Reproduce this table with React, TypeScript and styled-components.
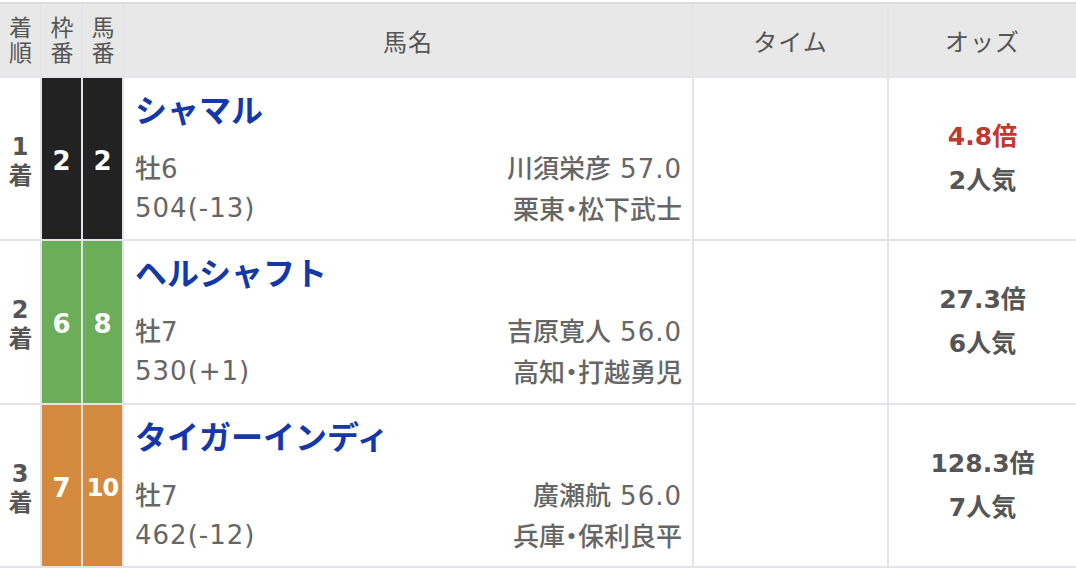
import styled, {createGlobalStyle} from "styled-components";

type Horse = {
    rank: number
    frame: number
    number: number
    name: string
    sex: string
    age: number
    weight: string
    jockey: string
    load: string
    stable: string
    odds: string
    popular: string
}

const horses: Horse[] = [
    {rank: 1, frame: 2, number: 2, name: "シャマル", sex: "牡", age: 6, weight: "504(-13)", jockey: "川須栄彦", load: "57.0", stable: "栗東・松下武士", odds: "4.8倍", popular: "2人気"},
    {rank: 2, frame: 6, number: 8, name: "ヘルシャフト", sex: "牡", age: 7, weight: "530(+1)", jockey: "吉原寛人", load: "56.0", stable: "高知・打越勇児", odds: "27.3倍", popular: "6人気"},
    {rank: 3, frame: 7, number: 10, name: "タイガーインディ", sex: "牡", age: 7, weight: "462(-12)", jockey: "廣瀬航", load: "56.0", stable: "兵庫・保利良平", odds: "128.3倍", popular: "7人気"},
]

const frameColors: Record<number, string> = {
    1: "#ffffff",
    2: "#222222",
    3: "#d9433b",
    4: "#2f6fc4",
    5: "#e8c83a",
    6: "#6bad58",
    7: "#d48b3f",
    8: "#e59bb3",
}

const LATIN = `"DejaVu Sans", "Noto Sans CJK JP", sans-serif`

export default function App() {
    return (
        <>
            <GlobalStyle/>
            <Table>
                <HeadCell><Vertical>着順</Vertical></HeadCell>
                <HeadCell><Vertical>枠番</Vertical></HeadCell>
                <HeadCell><Vertical>馬番</Vertical></HeadCell>
                <HeadCell>馬名</HeadCell>
                <HeadCell>タイム</HeadCell>
                <HeadCell>オッズ</HeadCell>

                {horses.map(h => (
                    <Row key={h.rank}>
                        <RankCell>
                            <RankText><RankNum>{h.rank}</RankNum>着</RankText>
                        </RankCell>
                        <NumberCell $bg={frameColors[h.frame]}>{h.frame}</NumberCell>
                        <NumberCell $bg={frameColors[h.frame]} $narrow={h.number >= 10}>{h.number}</NumberCell>
                        <NameCell>
                            <HorseName>{h.name}</HorseName>
                            <Info>
                                <span>{h.sex}<Num>{h.age}</Num></span>
                                <InfoRight>{h.jockey}<Load>{h.load}</Load></InfoRight>
                                <Num>{h.weight}</Num>
                                <InfoRight>{h.stable}</InfoRight>
                            </Info>
                        </NameCell>
                        <Cell/>
                        <OddsCell>
                            <Odds $top={h.rank === 1}>{h.odds}</Odds>
                            <Popular>{h.popular}</Popular>
                        </OddsCell>
                    </Row>
                ))}
            </Table>
        </>
    )
}

const GlobalStyle = createGlobalStyle`
  body {
    margin: 0;
    background: #fff;
    font-family: "Noto Sans CJK JP", "Noto Sans", sans-serif;
  }
`

const Table = styled.div`
  margin-top: 2px;
  display: grid;
  grid-template-columns: 40px 39px 39px 568px 193px 1fr;
  grid-template-rows: 72px 161px 162px 161px;
  gap: 2px;
  padding: 2px 0;
  background: #e3e3ea;
  box-shadow: inset 0 2px 0 #dcdcdc;
`

const Row = styled.div`
  display: contents;
`

const Cell = styled.div`
  background: #fff;
`

const HeadCell = styled.div`
  background: #e8e8e8;
  display: flex;
  align-items: center;
  justify-content: center;
  color: #555;
  font-size: 24px;
  letter-spacing: 1px;
`

const Vertical = styled.div`
  writing-mode: vertical-rl;
  text-orientation: upright;
  font-size: 23px;
  letter-spacing: 2px;
  line-height: 1;
  margin-top: 2px;
`

const RankCell = styled(Cell)`
  display: flex;
  align-items: center;
  justify-content: center;
  color: #555;
  padding-top: 4px;
`

const RankText = styled.div`
  writing-mode: vertical-rl;
  text-orientation: upright;
  font-size: 24px;
  font-weight: 700;
  line-height: 1;
  letter-spacing: 2px;
`

const RankNum = styled.span`
  font-family: ${LATIN};
`

const NumberCell = styled.div<{ $bg: string; $narrow?: boolean }>`
  background: ${p => p.$bg};
  color: #fff;
  display: flex;
  align-items: center;
  justify-content: center;
  font-family: ${LATIN};
  font-size: ${p => p.$narrow ? "24px" : "26px"};
  font-weight: 600;
  letter-spacing: ${p => p.$narrow ? "-1px" : "0"};
  padding-top: 4px;
`

const NameCell = styled(Cell)`
  padding: 10px 10px 0 11px;
  display: flex;
  flex-direction: column;
`

const HorseName = styled.div`
  color: #1538a8;
  font-size: 32px;
  font-weight: 700;
  line-height: 40px;
`

const Info = styled.div`
  margin-top: 18px;
  display: grid;
  grid-template-columns: 1fr auto;
  grid-auto-rows: 41px;
  align-items: center;
  color: #666;
  font-size: 26px;
  font-weight: 500;
`

const Num = styled.span`
  font-family: ${LATIN};
  letter-spacing: 1px;
`

const Load = styled(Num)`
  margin-left: 9px;
`

const InfoRight = styled.span`
  text-align: right;
  font-feature-settings: "palt";
`

const OddsCell = styled(Cell)`
  display: flex;
  flex-direction: column;
  align-items: center;
  justify-content: center;
  font-family: ${LATIN};
  font-weight: 700;
  font-size: 25px;
  line-height: 44px;
`

const Odds = styled.div<{ $top: boolean }>`
  color: ${p => p.$top ? "#c0392f" : "#555"};
`

const Popular = styled.div`
  color: #555;
`
